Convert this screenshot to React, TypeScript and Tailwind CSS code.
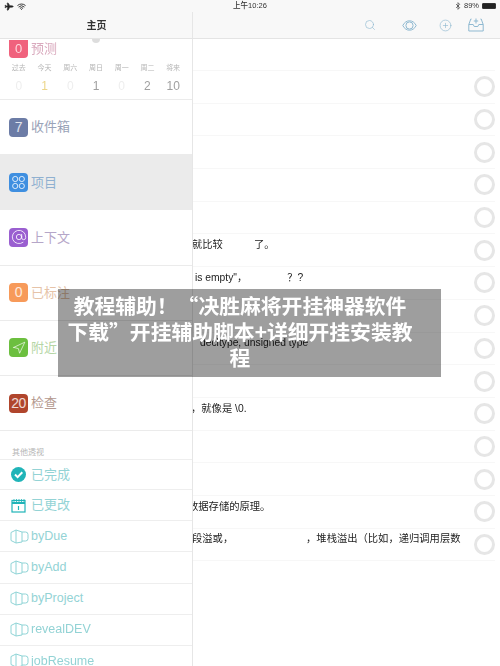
import type { ReactNode } from "react";
import { Plane, Wifi, Bluetooth, Search, CirclePlus, AtSign, Navigation } from "lucide-react";

const font = "font-['Liberation_Sans','Noto_Sans_CJK_SC',sans-serif]";

const days = [
  { label: "过去", count: "0", tone: "text-[#eeeeee]" },
  { label: "今天", count: "1", tone: "text-[#ecd68a]" },
  { label: "周六", count: "0", tone: "text-[#eeeeee]" },
  { label: "周日", count: "1", tone: "text-[#a0a0a0]" },
  { label: "周一", count: "0", tone: "text-[#eeeeee]" },
  { label: "周二", count: "2", tone: "text-[#a0a0a0]" },
  { label: "将来", count: "10", tone: "text-[#a0a0a0]" },
];

const perspectives: { badge: ReactNode; color: string; name: string; tone: string; active?: boolean }[] = [
  { badge: "7", color: "bg-[#6c7ca6]", name: "收件箱", tone: "text-[#9aa3b8]" },
  { badge: <ProjectDots />, color: "bg-[#3f8fe0]", name: "项目", tone: "text-[#8fb0d0]", active: true },
  { badge: <AtSign size={16} strokeWidth={1.5} />, color: "bg-[#9a5fd0]", name: "上下文", tone: "text-[#b5a6c8]" },
  { badge: "0", color: "bg-[#f79a5a]", name: "已标注", tone: "text-[#e6c3a8]" },
  { badge: <Navigation size={14} strokeWidth={1.4} />, color: "bg-[#6cbf3f]", name: "附近", tone: "text-[#b5d6a5]" },
  { badge: "20", color: "bg-[#b0452c]", name: "检查", tone: "text-[#b59a90]" },
];

const customViews = ["byDue", "byAdd", "byProject", "revealDEV", "jobResume"];

const taskRows: ReactNode[] = [
  null, null, null, null, null,
  <span className="ml-[-1px]">就比较<span className="ml-[31px]">了。</span></span>,
  <span className="ml-[2px]">is empty"，<span className="ml-[40px]">？?</span></span>,
  null,
  <span className="ml-[7px]">decltype, unsigned type</span>,
  null,
  <span className="ml-[-2px]">，就像是 \0.</span>,
  null, null,
  <span className="ml-[-5px]">数据存储的原理。</span>,
  <span className="ml-[-1px]">段溢或，<span className="ml-[78px]">，堆栈溢出（比如，递归调用层数</span></span>,
];

function ProjectDots() {
  return (
    <svg width="15" height="15" viewBox="0 0 15 15" fill="none" stroke="currentColor" strokeWidth="1">
      <circle cx="4.2" cy="4" r="2.6" />
      <circle cx="10.8" cy="4" r="2.6" />
      <circle cx="4.2" cy="11" r="2.6" />
      <circle cx="10.8" cy="11" r="2.6" />
    </svg>
  );
}

function ViewIcon() {
  return (
    <svg width="19" height="15" viewBox="0 0 19 15" fill="none" stroke="#8fd4d6" strokeWidth="1" className="shrink-0">
      <path d="M1 3.5 6 1v13l-5-2.5z" />
      <path d="M6 1l6 2v10l-6 1" />
      <path d="M12 3h3.5a2.5 2.5 0 0 1 2.5 2.5v4a2.5 2.5 0 0 1-2.5 2.5H12" />
    </svg>
  );
}

function EyeRings() {
  return (
    <svg width="15" height="11" viewBox="0 0 15 11" fill="none" stroke="#8fb9d1" strokeWidth="1">
      <path d="M.8 5.500C2.500 2.200 4.800.8 7.500.8s5 1.400 6.700 4.700c-1.700 3.300-4 4.700-6.700 4.700S2.500 8.800.8 5.500z" />
      <circle cx="7.500" cy="5.500" r="3.600" />
    </svg>
  );
}

function InboxPlus() {
  return (
    <svg width="16" height="14" viewBox="0 0 16 14" fill="none" stroke="#8fb9d1" strokeWidth="1">
      <path d="M3.500 1H2.800L.8 6.500V13h14.400V6.500L13.200 1h-.7" />
      <path d="M.8 6.500h4.400l1 2h3.600l1-2h4.400" />
      <path d="M8 .5v5M5.800 3h4.400" />
    </svg>
  );
}

function StatusBar() {
  return (
    <div className="flex h-[12px] items-center justify-between px-[4px] text-[7.5px] text-[#333333]">
      <div className="flex w-[120px] items-center gap-[4px]">
        <Plane size={9} fill="#222222" strokeWidth={1.5} className="rotate-45" />
        <Wifi size={9} strokeWidth={2.6} />
      </div>
      <span className="font-medium">上午10:26</span>
      <div className="flex w-[120px] items-center justify-end gap-[2px]">
        <Bluetooth size={8} strokeWidth={2} />
        <span>89%</span>
        <span className="ml-[1px] h-[6px] w-[14px] rounded-[1px] border border-[#333333] bg-[#222222]" />
      </div>
    </div>
  );
}

function Header() {
  return (
    <header className="relative z-10 flex h-[39px] shrink-0 flex-col border-b border-[#e4e4e4] bg-[#f8f8f8]">
      <StatusBar />
      <div className="flex flex-1 items-center">
        <div className="flex h-full w-[193px] items-center justify-center border-r border-[#e6e6e6] pl-[1px] text-[10px] font-bold text-[#333333]">
          主页
        </div>
        <div className="flex flex-1 items-center justify-end pr-[16px] text-[#8fb9d1]">
          <Search size={12} strokeWidth={1.3} />
          <span className="ml-[26px] flex"><EyeRings /></span>
          <CirclePlus size={13} strokeWidth={1.2} className="ml-[22px]" />
          <span className="ml-[16px] flex"><InboxPlus /></span>
        </div>
      </div>
    </header>
  );
}

function Forecast() {
  return (
    <div className="relative h-[61px] shrink-0 overflow-hidden border-b border-[#ebebeb]">
      <span className="absolute left-[92px] top-[-4px] h-[8px] w-[8px] rounded-full bg-[#dddddd]" />
      <div className="flex items-center gap-[3px] pl-[9px]">
        <span className="flex h-[18px] w-[19px] items-center justify-center rounded-b-[4px] bg-[#f0627d] text-[13px] text-[#ffd5dc]">0</span>
        <span className="text-[13px] text-[#d9a9bd]">预测</span>
      </div>
      <div className="grid grid-cols-7 px-[6px] pt-[2px]">
        {days.map((day) => (
          <div key={day.label} className="flex flex-col items-center">
            <span className="text-[7px] leading-[14px] text-[#b5b5b5]">{day.label}</span>
            <span className={`mt-[4px] text-[12px] leading-[14px] ${day.tone}`}>{day.count}</span>
          </div>
        ))}
      </div>
    </div>
  );
}

function Sidebar() {
  return (
    <aside className="flex w-[193px] shrink-0 flex-col border-r border-[#e6e6e6] bg-white">
      <Forecast />
      {perspectives.map((item) => (
        <div
          key={item.name}
          className={`flex h-[55.2px] shrink-0 items-center gap-[3px] border-b border-[#ebebeb] pl-[9px] ${item.active ? "bg-[#ebebeb]" : ""}`}
        >
          <span className={`flex h-[19px] w-[19px] items-center justify-center rounded-[4px] text-[14px] tracking-[-0.5px] text-white/80 ${item.color}`}>
            {item.badge}
          </span>
          <span className={`text-[13px] ${item.tone}`}>{item.name}</span>
        </div>
      ))}
      <div className="h-[28px] shrink-0 pl-[12px] pt-[17px] text-[8px] leading-[10px] text-[#b5b5b5]">其他透视</div>
      <div className="flex h-[31px] shrink-0 items-center gap-[5px] border-y border-[#eeeeee] pl-[11px] text-[13px] text-[#93d3d5]">
        <svg width="15" height="15" viewBox="0 0 15 15">
          <circle cx="7.5" cy="7.5" r="7.5" fill="#20b4b8" />
          <path d="M4 7.500l2.600 2.600L11.300 5.300" fill="none" stroke="#ffffff" strokeWidth="2" />
        </svg>
        已完成
      </div>
      <div className="flex h-[31px] shrink-0 items-center gap-[5px] border-b border-[#eeeeee] pl-[11px] text-[13px] text-[#93d3d5]">
        <svg width="15" height="15" viewBox="0 0 15 15" fill="none" stroke="#20b4b8">
          <rect x="1" y="2.5" width="13" height="11.5" strokeWidth="1.2" />
          <path d="M1 5h13" strokeWidth="2" />
          <path d="M3 1v3M5.500 1v3M8 1v3M10.500 1v3M13 1v3" strokeWidth="0.8" />
          <path d="M7.500 8v4" strokeWidth="1.2" />
        </svg>
        已更改
      </div>
      {customViews.map((name) => (
        <div key={name} className="flex h-[31.2px] shrink-0 items-center gap-[2px] border-b border-[#eeeeee] pl-[10px] text-[12.5px] text-[#93d3d5]">
          <ViewIcon />
          {name}
        </div>
      ))}
    </aside>
  );
}

function TaskList() {
  return (
    <main className="min-w-0 flex-1 overflow-hidden bg-white pr-[5.5px] pt-[31px]">
      <div className="border-t border-[#f7f7f7]" />
      {taskRows.map((text, i) => (
        <div key={i} className="flex h-[32.7px] items-center justify-between border-b border-[#f7f7f7]">
          <div className="min-w-0 whitespace-nowrap pb-[10px] text-[10.3px] leading-[12px] text-[#222222]">{text}</div>
          <span className="h-[21px] w-[21px] shrink-0 rounded-full border-[3px] border-[#e6e6e6]" />
        </div>
      ))}
    </main>
  );
}

export default function App() {
  return (
    <div className={`relative h-[666px] w-[500px] overflow-hidden bg-white ${font}`}>
      <div className="flex h-full flex-col blur-[0.4px]">
        <Header />
        <div className="flex min-h-0 flex-1">
          <Sidebar />
          <TaskList />
        </div>
      </div>
      <div className="absolute left-[58px] top-[289px] h-[88px] w-[383px] bg-black/38 pl-[7px] pr-[26px] pt-[3px]">
        <p className="text-center font-['Noto_Sans_CJK_SC',sans-serif] text-[20.8px] font-bold leading-[26px] text-white">
          教程辅助！“决胜麻将开挂神器软件下载”开挂辅助脚本+详细开挂安装教程
        </p>
      </div>
    </div>
  );
}
